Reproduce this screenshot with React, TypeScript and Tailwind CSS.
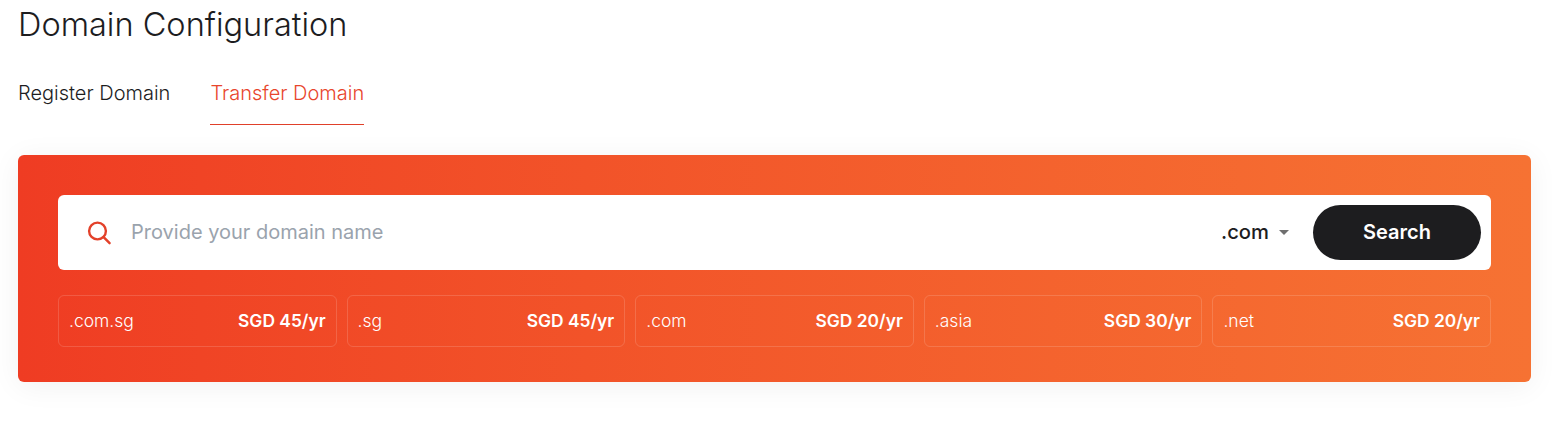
import React from "react";

const rows = [
  [".com.sg", "SGD 45/yr"],
  [".sg", "SGD 45/yr"],
  [".com", "SGD 20/yr"],
  [".asia", "SGD 30/yr"],
  [".net", "SGD 20/yr"],
];

export default function App() {
  return (
    <div className="w-[1552px] h-[432px] overflow-hidden bg-white pl-[18px] pr-[21px] font-['Inter',sans-serif]">
      <h1 className="pt-[1px] text-[32.5px] leading-[48px] font-light text-[#1d1d1f]">Domain Configuration</h1>
      <div className="mt-[32px] flex gap-[40px] text-[20px] font-light leading-[24px]">
        <div className="h-[44px] text-[#1d1d1f]">Register Domain</div>
        <div className="h-[44px] border-b border-b-[#e0402a] text-[#e8452c]">Transfer Domain</div>
      </div>
      <div className="mt-[30px] h-[227px] rounded-[6px] bg-gradient-to-r from-[#ef3c23] to-[#f67233] p-[40px] shadow-[0_4px_30px_rgba(0,0,0,0.06)]">
        <div className="flex h-[75px] items-center rounded-[6px] bg-white pl-[29px] pr-[10px]">
          <svg width="26" height="26" viewBox="0 0 26 26" fill="none" stroke="#e3412a" strokeWidth="2.4" strokeLinecap="round">
            <circle cx="10.5" cy="11" r="8.4" />
            <path d="M16.6 17.2l6 6" />
          </svg>
          <span className="ml-[18px] flex-1 pb-[2px] text-[20px] font-normal text-[#9aa3ad]">Provide your domain name</span>
          <span className="pb-[1px] text-[20.2px] font-medium text-[#1d1d1f]">.com</span>
          <svg className="ml-[10px]" width="10" height="5" viewBox="0 0 10 5" fill="#6f6f6f">
            <path d="M0 0h10L5 5z" />
          </svg>
          <button className="ml-[24px] flex h-[55px] w-[168px] items-center justify-center rounded-full bg-[#1d1d1f] pb-[1px] text-[20px] font-semibold text-white">
            Search
          </button>
        </div>
        <div className="mt-[25px] grid grid-cols-5 gap-[10px]">
          {rows.map(([name, price]) => (
            <div key={name} className="flex h-[52px] items-center justify-between rounded-[6px] border border-white/15 px-[10px] text-[17.5px] text-white">
              <span className="font-light">{name}</span>
              <span className="text-[17.4px] font-semibold">{price}</span>
            </div>
          ))}
        </div>
      </div>
    </div>
  );
}
